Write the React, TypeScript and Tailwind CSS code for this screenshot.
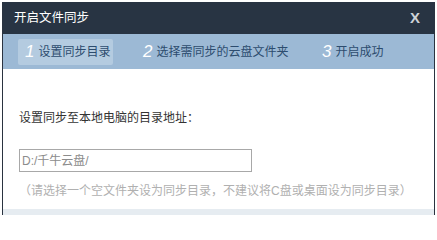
const font = { fontFamily: '"Liberation Sans", "Noto Sans CJK SC", sans-serif' };

const Tab = ({ n, label, active, className }: { n: string; label: string; active?: boolean; className: string }) => (
  <div
    className={`flex h-[26px] shrink-0 items-center gap-[4px] whitespace-nowrap px-[7px] rounded-[2px] ${active ? "bg-[#b4cbe0]" : ""} ${className}`}
  >
    <span className="text-[17px] italic leading-none text-white">{n}</span>
    <span className="text-[12px] leading-none text-[#2d4c6e]">{label}</span>
  </div>
);

export default function App() {
  return (
    <div className="h-[215px] w-[437px] overflow-hidden bg-white pt-[2px]" style={font}>
      <div className="ml-[2px] flex h-[213px] w-[433px] flex-col border-x border-[#2a3340]">
        {/* title bar */}
        <div className="flex h-[32px] items-center justify-between bg-[#283443] pl-[11px] pr-[14px]">
          <span className="text-[12.5px] text-white">开启文件同步</span>
          <span className="text-[15px] font-bold text-[#cdd2d8]">X</span>
        </div>

        {/* steps */}
        <div className="flex h-[35px] items-center bg-[#9cb9d5] pl-[15px]">
          <Tab n="1" label="设置同步目录" active className="w-[95px]" />
          <Tab n="2" label="选择需同步的云盘文件夹" className="ml-[23px] w-[179px]" />
          <Tab n="3" label="开启成功" />
        </div>

        {/* body */}
        <div className="flex flex-1 flex-col pl-[16px] pt-[41px]">
          <p className="text-[12px] leading-[17px] text-[#333]">设置同步至本地电脑的目录地址：</p>
          <div className="mt-[22px] flex h-[23px] w-[233px] items-center border border-[#a8a8a8] pl-[2px] text-[12px] text-[#8c8c8c]">
            D:/千牛云盘/
          </div>
          <p className="mt-[11px] whitespace-nowrap text-[12px] leading-[17px] text-[#b0b0b0]">
            （请选择一个空文件夹设为同步目录，不建议将C盘或桌面设为同步目录）
          </p>
        </div>
        <div className="h-[6px] bg-[#e6ecf1]" />
      </div>
    </div>
  );
}
